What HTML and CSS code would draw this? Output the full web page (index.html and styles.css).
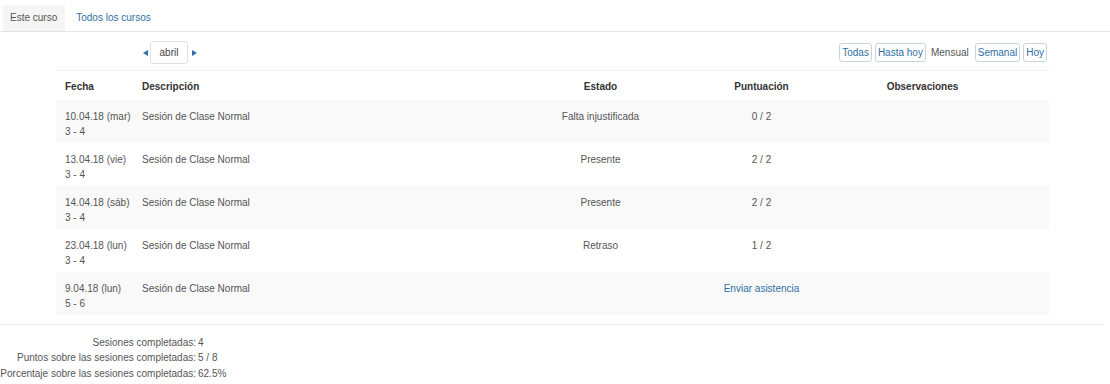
FILE: index.html
```html
<!DOCTYPE html>
<html lang="es">
<head>
<meta charset="utf-8">
<title>Asistencia</title>
<link rel="stylesheet" href="styles.css">
</head>
<body>
<div class="tabs">
  <span class="tab tab-active">Este curso</span>
  <a class="tab tab-link" href="#">Todos los cursos</a>
</div>
<div class="content">
  <div class="toolbar">
    <div class="month-nav">
      <span class="arrow arrow-left"></span>
      <span class="month-box">abril</span>
      <span class="arrow arrow-right"></span>
    </div>
    <div class="views">
      <a class="btn" href="#">Todas</a>
      <a class="btn" href="#">Hasta hoy</a>
      <span class="current">Mensual</span>
      <a class="btn" href="#">Semanal</a>
      <a class="btn" href="#">Hoy</a>
    </div>
  </div>
  <table class="sessions">
    <colgroup>
      <col class="c-date"><col class="c-desc"><col class="c-state"><col class="c-points"><col class="c-notes"><col class="c-rest">
    </colgroup>
    <thead>
      <tr><th class="left">Fecha</th><th class="left">Descripción</th><th>Estado</th><th>Puntuación</th><th>Observaciones</th><th></th></tr>
    </thead>
    <tbody>
      <tr><td class="left date">10.04.18 (mar)<br>3 - 4</td><td class="left">Sesión de Clase Normal</td><td>Falta injustificada</td><td>0 / 2</td><td></td><td></td></tr>
      <tr><td class="left date">13.04.18 (vie)<br>3 - 4</td><td class="left">Sesión de Clase Normal</td><td>Presente</td><td>2 / 2</td><td></td><td></td></tr>
      <tr><td class="left date">14.04.18 (sáb)<br>3 - 4</td><td class="left">Sesión de Clase Normal</td><td>Presente</td><td>2 / 2</td><td></td><td></td></tr>
      <tr><td class="left date">23.04.18 (lun)<br>3 - 4</td><td class="left">Sesión de Clase Normal</td><td>Retraso</td><td>1 / 2</td><td></td><td></td></tr>
      <tr><td class="left date">9.04.18 (lun)<br>5 - 6</td><td class="left">Sesión de Clase Normal</td><td></td><td><a class="link" href="#">Enviar asistencia</a></td><td></td><td></td></tr>
    </tbody>
  </table>
</div>
<div class="divider"></div>
<div class="summary">
  <span class="label">Sesiones completadas:</span><span class="value">4</span>
  <span class="label">Puntos sobre las sesiones completadas:</span><span class="value">5 / 8</span>
  <span class="label">Porcentaje sobre las sesiones completadas:</span><span class="value">62.5%</span>
</div>
</body>
</html>
```
FILE: styles.css
```css
html, body {
  margin: 0;
  padding: 0;
  background: #fff;
}
body {
  width: 1110px;
  font-family: "Liberation Sans", Arial, sans-serif;
  font-size: 10px;
  color: #555;
}
a { text-decoration: none; color: #2f6fa5; }

.tabs {
  display: flex;
  align-items: flex-end;
  height: 31px;
  border-bottom: 1px solid #e6e6e6;
}
.tab {
  height: 26px;
  line-height: 26px;
  padding: 0 8px;
}
.tab-active {
  margin-left: 3px;
  padding: 0 8px 0 7px;
  background: #f5f5f5;
  color: #555;
}
.tab-link {
  margin-left: 3px;
}

.content {
  padding: 0 61px 0 56px;
}
.toolbar {
  display: flex;
  justify-content: space-between;
  align-items: center;
  margin-top: 9px;
  height: 23px;
  margin-bottom: 6px;
}
.month-nav {
  display: flex;
  align-items: center;
  margin-left: 87px;
}
.arrow {
  width: 0;
  height: 0;
  border-top: 3.5px solid transparent;
  border-bottom: 3.5px solid transparent;
}
.arrow-left { border-right: 5px solid #2f6fa5; margin-right: 2px; }
.arrow-right { border-left: 5px solid #2f6fa5; margin-left: 4px; }
.month-box {
  display: inline-block;
  width: 36px;
  height: 21px;
  line-height: 21px;
  text-align: center;
  border: 1px solid #e2e2e2;
  border-radius: 3px;
  color: #444;
}
.views {
  display: flex;
  align-items: center;
  gap: 3px;
  margin-right: 2px;
}
.btn {
  display: inline-block;
  height: 17px;
  line-height: 17px;
  padding: 0 2px;
  border: 1px solid #cdd3d8;
  border-radius: 3px;
}
.current {
  margin: 0 3px 0 2px;
  color: #555;
}

.sessions {
  width: 993px;
  border-collapse: collapse;
  table-layout: fixed;
  border-top: 1px solid #f0f0f0;
}
.c-date { width: 78px; }
.c-desc { width: 387px; }
.c-state { width: 160px; }
.c-points { width: 162px; }
.c-notes { width: 160px; }
.c-rest { width: 46px; }
.sessions th {
  height: 29px;
  box-sizing: border-box;
  padding: 3px 9px 0 8px;
  font-weight: bold;
  color: #333;
  text-align: center;
  vertical-align: middle;
}
.sessions td {
  height: 43px;
  box-sizing: border-box;
  padding: 9px 9px 4px 8px;
  line-height: 15px;
  text-align: center;
  vertical-align: top;
  color: #555;
}
.sessions th.left, .sessions td.left { text-align: left; }
.sessions th:first-child, .sessions td:first-child { padding-left: 9px; }
.sessions td.date { white-space: nowrap; padding-right: 0; }
.sessions tbody tr:nth-child(odd) td { background: #f9f9f9; }
.link { color: #2f6fa5; }

.divider {
  width: 1104px;
  height: 1px;
  margin-top: 9px;
  background: #ececec;
}
.summary {
  display: grid;
  grid-template-columns: 196px auto;
  column-gap: 2px;
  justify-content: start;
  margin-top: 10px;
  font-size: 10px;
  line-height: 15.5px;
  color: #555;
}
.summary .label { text-align: right; white-space: nowrap; }
```
